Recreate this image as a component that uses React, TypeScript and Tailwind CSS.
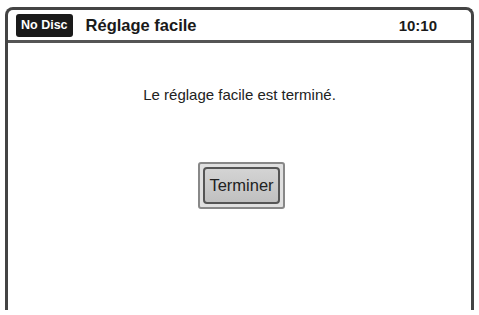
export default function App() {
  return (
    <div className="w-[479px] h-[315px] bg-white overflow-hidden pt-[7px] px-[5px]" style={{ fontFamily: '"Liberation Sans", Arial, sans-serif' }}>
      <div className="h-[303px] border-[3px] border-b-0 border-[#444] rounded-t-[8px] flex flex-col">
        {/* Header */}
        <div className="h-[33px] border-b-[3px] border-[#555] flex items-center pl-[8px] pr-[34px]">
          <span className="bg-[#1a1a1a] text-white text-[12.5px] font-bold rounded-[3px] px-[5px] h-[23px] flex items-center leading-none">
            No Disc
          </span>
          <span className="ml-[13px] text-[16.5px] font-bold text-[#1a1a1a] leading-none">Réglage facile</span>
          <span className="ml-auto text-[15px] font-bold text-[#1a1a1a] leading-none">10:10</span>
        </div>

        {/* Body */}
        <div className="flex-1 flex flex-col items-center">
          <p className="mt-[44px] text-[15px] text-[#222] leading-none">Le réglage facile est terminé.</p>
          <div className="mt-[60px] ml-[4px] w-[87px] h-[47px] border-2 border-[#888] bg-[#e0e0e0] rounded-[3px] p-[3px]">
            <div className="w-full h-full border-2 border-[#555] rounded-[4px] bg-gradient-to-b from-[#d4d4d4] to-[#c0c0c0] flex items-center justify-center">
              <span className="text-[16.5px] text-[#222] leading-none">Terminer</span>
            </div>
          </div>
        </div>
      </div>
    </div>
  )
}
